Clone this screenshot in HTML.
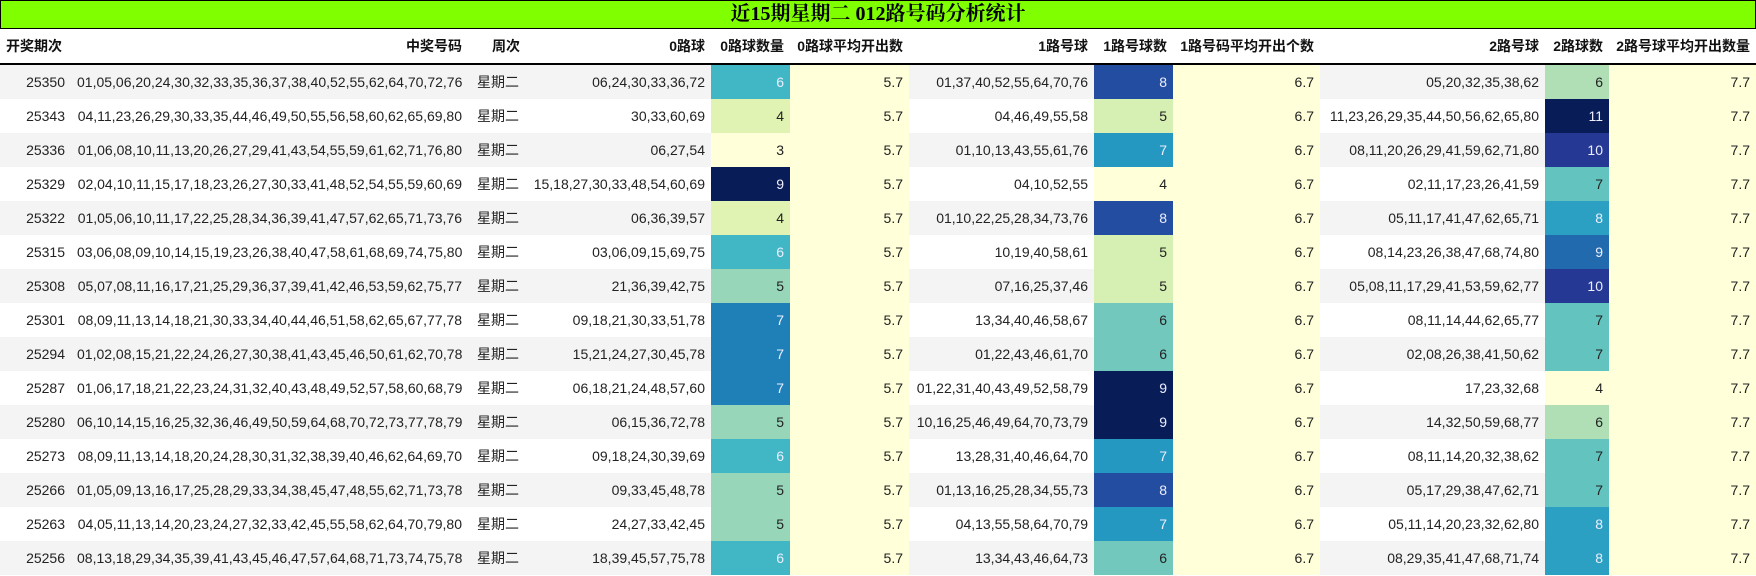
<!DOCTYPE html>
<html><head><meta charset="utf-8"><style>
body{margin:0;width:1756px;height:576px;overflow:hidden;background:#fff;font-family:"Liberation Sans","Noto Sans CJK SC",sans-serif;color:#222}
.title{position:absolute;left:0;top:0;width:1754px;height:27px;border:1px solid #000;background:#7fff00;text-align:center;font:bold 20px/27px "Liberation Serif","Noto Serif CJK SC",serif;color:#000}
table{position:absolute;left:0;top:29px;border-collapse:collapse;table-layout:fixed;width:1756px;font-size:14px}
th{height:34px;font-weight:bold;text-align:right;padding:0 6px;border-bottom:2px solid #000;white-space:nowrap;font-size:14px;color:#111}
td{height:34px;padding:0 6px;text-align:right;white-space:nowrap}
tr:nth-child(odd) td{background:#f4f4f4}
tr:nth-child(even) td{background:#fff}
td.w{text-align:left;padding-left:9px}
tr td.y{background:#ffffd9}
tr td.c{}
.th1{text-align:left}
</style></head><body>
<div class="title">近15期星期二 012路号码分析统计</div>
<table>
<colgroup><col style="width:71px"><col style="width:397px"><col style="width:58px"><col style="width:185px"><col style="width:79px"><col style="width:119px"><col style="width:185px"><col style="width:79px"><col style="width:147px"><col style="width:225px"><col style="width:64px"><col style="width:147px"></colgroup>
<thead><tr><th class="th1">开奖期次</th><th>中奖号码</th><th>周次</th><th>0路球</th><th>0路球数量</th><th>0路球平均开出数</th><th>1路号球</th><th>1路号球数</th><th>1路号码平均开出个数</th><th>2路号球</th><th>2路球数</th><th>2路号球平均开出数量</th></tr></thead>
<tbody>
<tr><td>25350</td><td>01,05,06,20,24,30,32,33,35,36,37,38,40,52,55,62,64,70,72,76</td><td class="w">星期二</td><td>06,24,30,33,36,72</td><td style="background:#41b6c4;color:#eef">6</td><td class="y">5.7</td><td>01,37,40,52,55,64,70,76</td><td style="background:#234da0;color:#eef">8</td><td class="y">6.7</td><td>05,20,32,35,38,62</td><td style="background:#b0dfb5">6</td><td class="y">7.7</td></tr>
<tr><td>25343</td><td>04,11,23,26,29,30,33,35,44,46,49,50,55,56,58,60,62,65,69,80</td><td class="w">星期二</td><td>30,33,60,69</td><td style="background:#e0f3b2">4</td><td class="y">5.7</td><td>04,46,49,55,58</td><td style="background:#d6efb2">5</td><td class="y">6.7</td><td>11,23,26,29,35,44,50,56,62,65,80</td><td style="background:#081d58;color:#eef">11</td><td class="y">7.7</td></tr>
<tr><td>25336</td><td>01,06,08,10,11,13,20,26,27,29,41,43,54,55,59,61,62,71,76,80</td><td class="w">星期二</td><td>06,27,54</td><td style="background:#ffffd9">3</td><td class="y">5.7</td><td>01,10,13,43,55,61,76</td><td style="background:#2498c1;color:#eef">7</td><td class="y">6.7</td><td>08,11,20,26,29,41,59,62,71,80</td><td style="background:#253894;color:#eef">10</td><td class="y">7.7</td></tr>
<tr><td>25329</td><td>02,04,10,11,15,17,18,23,26,27,30,33,41,48,52,54,55,59,60,69</td><td class="w">星期二</td><td>15,18,27,30,33,48,54,60,69</td><td style="background:#081d58;color:#eef">9</td><td class="y">5.7</td><td>04,10,52,55</td><td style="background:#ffffd9">4</td><td class="y">6.7</td><td>02,11,17,23,26,41,59</td><td style="background:#63c3bf">7</td><td class="y">7.7</td></tr>
<tr><td>25322</td><td>01,05,06,10,11,17,22,25,28,34,36,39,41,47,57,62,65,71,73,76</td><td class="w">星期二</td><td>06,36,39,57</td><td style="background:#e0f3b2">4</td><td class="y">5.7</td><td>01,10,22,25,28,34,73,76</td><td style="background:#234da0;color:#eef">8</td><td class="y">6.7</td><td>05,11,17,41,47,62,65,71</td><td style="background:#2ca0c2;color:#eef">8</td><td class="y">7.7</td></tr>
<tr><td>25315</td><td>03,06,08,09,10,14,15,19,23,26,38,40,47,58,61,68,69,74,75,80</td><td class="w">星期二</td><td>03,06,09,15,69,75</td><td style="background:#41b6c4;color:#eef">6</td><td class="y">5.7</td><td>10,19,40,58,61</td><td style="background:#d6efb2">5</td><td class="y">6.7</td><td>08,14,23,26,38,47,68,74,80</td><td style="background:#216aae;color:#eef">9</td><td class="y">7.7</td></tr>
<tr><td>25308</td><td>05,07,08,11,16,17,21,25,29,36,37,39,41,42,46,53,59,62,75,77</td><td class="w">星期二</td><td>21,36,39,42,75</td><td style="background:#97d6b9">5</td><td class="y">5.7</td><td>07,16,25,37,46</td><td style="background:#d6efb2">5</td><td class="y">6.7</td><td>05,08,11,17,29,41,53,59,62,77</td><td style="background:#253894;color:#eef">10</td><td class="y">7.7</td></tr>
<tr><td>25301</td><td>08,09,11,13,14,18,21,30,33,34,40,44,46,51,58,62,65,67,77,78</td><td class="w">星期二</td><td>09,18,21,30,33,51,78</td><td style="background:#1f80b8;color:#eef">7</td><td class="y">5.7</td><td>13,34,40,46,58,67</td><td style="background:#73c8bd">6</td><td class="y">6.7</td><td>08,11,14,44,62,65,77</td><td style="background:#63c3bf">7</td><td class="y">7.7</td></tr>
<tr><td>25294</td><td>01,02,08,15,21,22,24,26,27,30,38,41,43,45,46,50,61,62,70,78</td><td class="w">星期二</td><td>15,21,24,27,30,45,78</td><td style="background:#1f80b8;color:#eef">7</td><td class="y">5.7</td><td>01,22,43,46,61,70</td><td style="background:#73c8bd">6</td><td class="y">6.7</td><td>02,08,26,38,41,50,62</td><td style="background:#63c3bf">7</td><td class="y">7.7</td></tr>
<tr><td>25287</td><td>01,06,17,18,21,22,23,24,31,32,40,43,48,49,52,57,58,60,68,79</td><td class="w">星期二</td><td>06,18,21,24,48,57,60</td><td style="background:#1f80b8;color:#eef">7</td><td class="y">5.7</td><td>01,22,31,40,43,49,52,58,79</td><td style="background:#081d58;color:#eef">9</td><td class="y">6.7</td><td>17,23,32,68</td><td style="background:#ffffd9">4</td><td class="y">7.7</td></tr>
<tr><td>25280</td><td>06,10,14,15,16,25,32,36,46,49,50,59,64,68,70,72,73,77,78,79</td><td class="w">星期二</td><td>06,15,36,72,78</td><td style="background:#97d6b9">5</td><td class="y">5.7</td><td>10,16,25,46,49,64,70,73,79</td><td style="background:#081d58;color:#eef">9</td><td class="y">6.7</td><td>14,32,50,59,68,77</td><td style="background:#b0dfb5">6</td><td class="y">7.7</td></tr>
<tr><td>25273</td><td>08,09,11,13,14,18,20,24,28,30,31,32,38,39,40,46,62,64,69,70</td><td class="w">星期二</td><td>09,18,24,30,39,69</td><td style="background:#41b6c4;color:#eef">6</td><td class="y">5.7</td><td>13,28,31,40,46,64,70</td><td style="background:#2498c1;color:#eef">7</td><td class="y">6.7</td><td>08,11,14,20,32,38,62</td><td style="background:#63c3bf">7</td><td class="y">7.7</td></tr>
<tr><td>25266</td><td>01,05,09,13,16,17,25,28,29,33,34,38,45,47,48,55,62,71,73,78</td><td class="w">星期二</td><td>09,33,45,48,78</td><td style="background:#97d6b9">5</td><td class="y">5.7</td><td>01,13,16,25,28,34,55,73</td><td style="background:#234da0;color:#eef">8</td><td class="y">6.7</td><td>05,17,29,38,47,62,71</td><td style="background:#63c3bf">7</td><td class="y">7.7</td></tr>
<tr><td>25263</td><td>04,05,11,13,14,20,23,24,27,32,33,42,45,55,58,62,64,70,79,80</td><td class="w">星期二</td><td>24,27,33,42,45</td><td style="background:#97d6b9">5</td><td class="y">5.7</td><td>04,13,55,58,64,70,79</td><td style="background:#2498c1;color:#eef">7</td><td class="y">6.7</td><td>05,11,14,20,23,32,62,80</td><td style="background:#2ca0c2;color:#eef">8</td><td class="y">7.7</td></tr>
<tr><td>25256</td><td>08,13,18,29,34,35,39,41,43,45,46,47,57,64,68,71,73,74,75,78</td><td class="w">星期二</td><td>18,39,45,57,75,78</td><td style="background:#41b6c4;color:#eef">6</td><td class="y">5.7</td><td>13,34,43,46,64,73</td><td style="background:#73c8bd">6</td><td class="y">6.7</td><td>08,29,35,41,47,68,71,74</td><td style="background:#2ca0c2;color:#eef">8</td><td class="y">7.7</td></tr>
</tbody></table>
</body></html>
